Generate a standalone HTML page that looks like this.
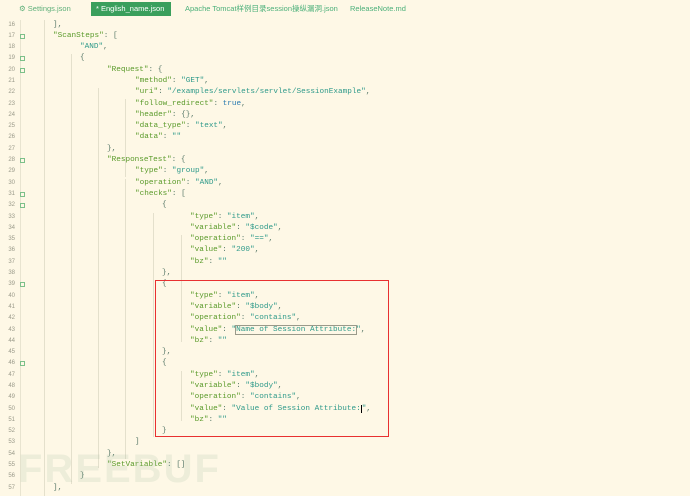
<!DOCTYPE html>
<html><head><meta charset="utf-8"><style>
body{margin:0;width:690px;height:496px;overflow:hidden;background:#fef8e6;position:relative;font-family:"Liberation Sans","Noto Sans CJK SC",sans-serif}
.tab{position:absolute;top:3px;font-size:7.5px;color:#4cb07a;line-height:12px}
.code{position:absolute;left:0;top:19.5px;font-family:"Liberation Mono",monospace;font-size:7.7px}
.l{height:11.3px;line-height:11.3px;position:relative;white-space:pre}
.n{position:absolute;left:0;width:15px;text-align:right;color:#9a9a8a;font-size:6px;font-family:"Liberation Sans",sans-serif}
.f{position:absolute;left:20px;top:3px;width:5px;height:5px;border:1px solid #7cc08a;box-sizing:border-box}
.t{position:absolute}
.k{color:#5a9a2a}.s{color:#2f9a8a}.b{color:#2a7ab0}.p{color:#5a7a6a}
.g{position:absolute;width:1px;background:#e4e0cc}
</style></head><body>
<div class="tab" style="left:19px;color:#5fb07a">⚙ Settings.json</div>
<div class="tab" style="left:91px;top:2px;width:80px;height:14px;background:#3a9f5c;color:#fff;padding-left:5px;box-sizing:border-box;line-height:14px">* English_name.json</div>
<div class="tab" style="left:185px">Apache Tomcat样例目录session操纵漏洞.json</div>
<div class="tab" style="left:350px">ReleaseNote.md</div>

<div class="g" style="left:20px;top:20px;height:476px;background:#e8e4d0"></div>
<div class="g" style="left:44px;top:20px;height:476px"></div>
<div class="g" style="left:71px;top:54px;height:430px"></div>
<div class="g" style="left:98px;top:88px;height:380px"></div>
<div class="g" style="left:125px;top:99px;height:78px"></div>
<div class="g" style="left:125px;top:179px;height:280px"></div>
<div class="g" style="left:153px;top:213px;height:224px"></div>
<div class="g" style="left:181px;top:235px;height:62px"></div>
<div class="g" style="left:181px;top:292px;height:50px"></div>
<div class="g" style="left:181px;top:371px;height:50px"></div>

<div class="code">
<div class="l"><span class="n">16</span><span class="t p" style="left:53px">],</span></div>
<div class="l"><span class="n">17</span><span class="f"></span><span class="t" style="left:53px"><span class="k">"ScanSteps"</span><span class="p">: [</span></span></div>
<div class="l"><span class="n">18</span><span class="t" style="left:80px"><span class="s">"AND"</span><span class="p">,</span></span></div>
<div class="l"><span class="n">19</span><span class="f"></span><span class="t p" style="left:80px">{</span></div>
<div class="l"><span class="n">20</span><span class="f"></span><span class="t" style="left:107px"><span class="k">"Request"</span><span class="p">: {</span></span></div>
<div class="l"><span class="n">21</span><span class="t" style="left:135px"><span class="k">"method"</span><span class="p">: </span><span class="s">"GET"</span><span class="p">,</span></span></div>
<div class="l"><span class="n">22</span><span class="t" style="left:135px"><span class="k">"uri"</span><span class="p">: </span><span class="s">"/examples/servlets/servlet/SessionExample"</span><span class="p">,</span></span></div>
<div class="l"><span class="n">23</span><span class="t" style="left:135px"><span class="k">"follow_redirect"</span><span class="p">: </span><span class="b">true</span><span class="p">,</span></span></div>
<div class="l"><span class="n">24</span><span class="t" style="left:135px"><span class="k">"header"</span><span class="p">: {},</span></span></div>
<div class="l"><span class="n">25</span><span class="t" style="left:135px"><span class="k">"data_type"</span><span class="p">: </span><span class="s">"text"</span><span class="p">,</span></span></div>
<div class="l"><span class="n">26</span><span class="t" style="left:135px"><span class="k">"data"</span><span class="p">: </span><span class="s">""</span></span></div>
<div class="l"><span class="n">27</span><span class="t p" style="left:107px">},</span></div>
<div class="l"><span class="n">28</span><span class="f"></span><span class="t" style="left:107px"><span class="k">"ResponseTest"</span><span class="p">: {</span></span></div>
<div class="l"><span class="n">29</span><span class="t" style="left:135px"><span class="k">"type"</span><span class="p">: </span><span class="s">"group"</span><span class="p">,</span></span></div>
<div class="l"><span class="n">30</span><span class="t" style="left:135px"><span class="k">"operation"</span><span class="p">: </span><span class="s">"AND"</span><span class="p">,</span></span></div>
<div class="l"><span class="n">31</span><span class="f"></span><span class="t" style="left:135px"><span class="k">"checks"</span><span class="p">: [</span></span></div>
<div class="l"><span class="n">32</span><span class="f"></span><span class="t p" style="left:162px">{</span></div>
<div class="l"><span class="n">33</span><span class="t" style="left:190px"><span class="k">"type"</span><span class="p">: </span><span class="s">"item"</span><span class="p">,</span></span></div>
<div class="l"><span class="n">34</span><span class="t" style="left:190px"><span class="k">"variable"</span><span class="p">: </span><span class="s">"$code"</span><span class="p">,</span></span></div>
<div class="l"><span class="n">35</span><span class="t" style="left:190px"><span class="k">"operation"</span><span class="p">: </span><span class="s">"=="</span><span class="p">,</span></span></div>
<div class="l"><span class="n">36</span><span class="t" style="left:190px"><span class="k">"value"</span><span class="p">: </span><span class="s">"200"</span><span class="p">,</span></span></div>
<div class="l"><span class="n">37</span><span class="t" style="left:190px"><span class="k">"bz"</span><span class="p">: </span><span class="s">""</span></span></div>
<div class="l"><span class="n">38</span><span class="t p" style="left:162px">},</span></div>
<div class="l"><span class="n">39</span><span class="f"></span><span class="t p" style="left:162px">{</span></div>
<div class="l"><span class="n">40</span><span class="t" style="left:190px"><span class="k">"type"</span><span class="p">: </span><span class="s">"item"</span><span class="p">,</span></span></div>
<div class="l"><span class="n">41</span><span class="t" style="left:190px"><span class="k">"variable"</span><span class="p">: </span><span class="s">"$body"</span><span class="p">,</span></span></div>
<div class="l"><span class="n">42</span><span class="t" style="left:190px"><span class="k">"operation"</span><span class="p">: </span><span class="s">"contains"</span><span class="p">,</span></span></div>
<div class="l"><span class="n">43</span><span class="t" style="left:190px"><span class="k">"value"</span><span class="p">: </span><span class="s">"<span style="outline:1px solid #9a9a8a;outline-offset:0">Name of Session Attribute:</span>"</span><span class="p">,</span></span></div>
<div class="l"><span class="n">44</span><span class="t" style="left:190px"><span class="k">"bz"</span><span class="p">: </span><span class="s">""</span></span></div>
<div class="l"><span class="n">45</span><span class="t p" style="left:162px">},</span></div>
<div class="l"><span class="n">46</span><span class="f"></span><span class="t p" style="left:162px">{</span></div>
<div class="l"><span class="n">47</span><span class="t" style="left:190px"><span class="k">"type"</span><span class="p">: </span><span class="s">"item"</span><span class="p">,</span></span></div>
<div class="l"><span class="n">48</span><span class="t" style="left:190px"><span class="k">"variable"</span><span class="p">: </span><span class="s">"$body"</span><span class="p">,</span></span></div>
<div class="l"><span class="n">49</span><span class="t" style="left:190px"><span class="k">"operation"</span><span class="p">: </span><span class="s">"contains"</span><span class="p">,</span></span></div>
<div class="l"><span class="n">50</span><span class="t" style="left:190px"><span class="k">"value"</span><span class="p">: </span><span class="s">"Value of Session Attribute:<span style="border-left:1px solid #000"></span>"</span><span class="p">,</span></span></div>
<div class="l"><span class="n">51</span><span class="t" style="left:190px"><span class="k">"bz"</span><span class="p">: </span><span class="s">""</span></span></div>
<div class="l"><span class="n">52</span><span class="t p" style="left:162px">}</span></div>
<div class="l"><span class="n">53</span><span class="t p" style="left:135px">]</span></div>
<div class="l"><span class="n">54</span><span class="t p" style="left:107px">},</span></div>
<div class="l"><span class="n">55</span><span class="t" style="left:107px"><span class="k">"SetVariable"</span><span class="p">: []</span></span></div>
<div class="l"><span class="n">56</span><span class="t p" style="left:80px">}</span></div>
<div class="l"><span class="n">57</span><span class="t p" style="left:53px">],</span></div>
</div>

<div style="position:absolute;left:155px;top:280px;width:234px;height:157px;border:1.5px solid #e83030;box-sizing:border-box"></div>
<div style="position:absolute;left:18px;top:447px;font:bold 40px 'Liberation Sans',sans-serif;color:rgba(160,190,160,0.18);letter-spacing:2px">FREEBUF</div>
</body></html>
